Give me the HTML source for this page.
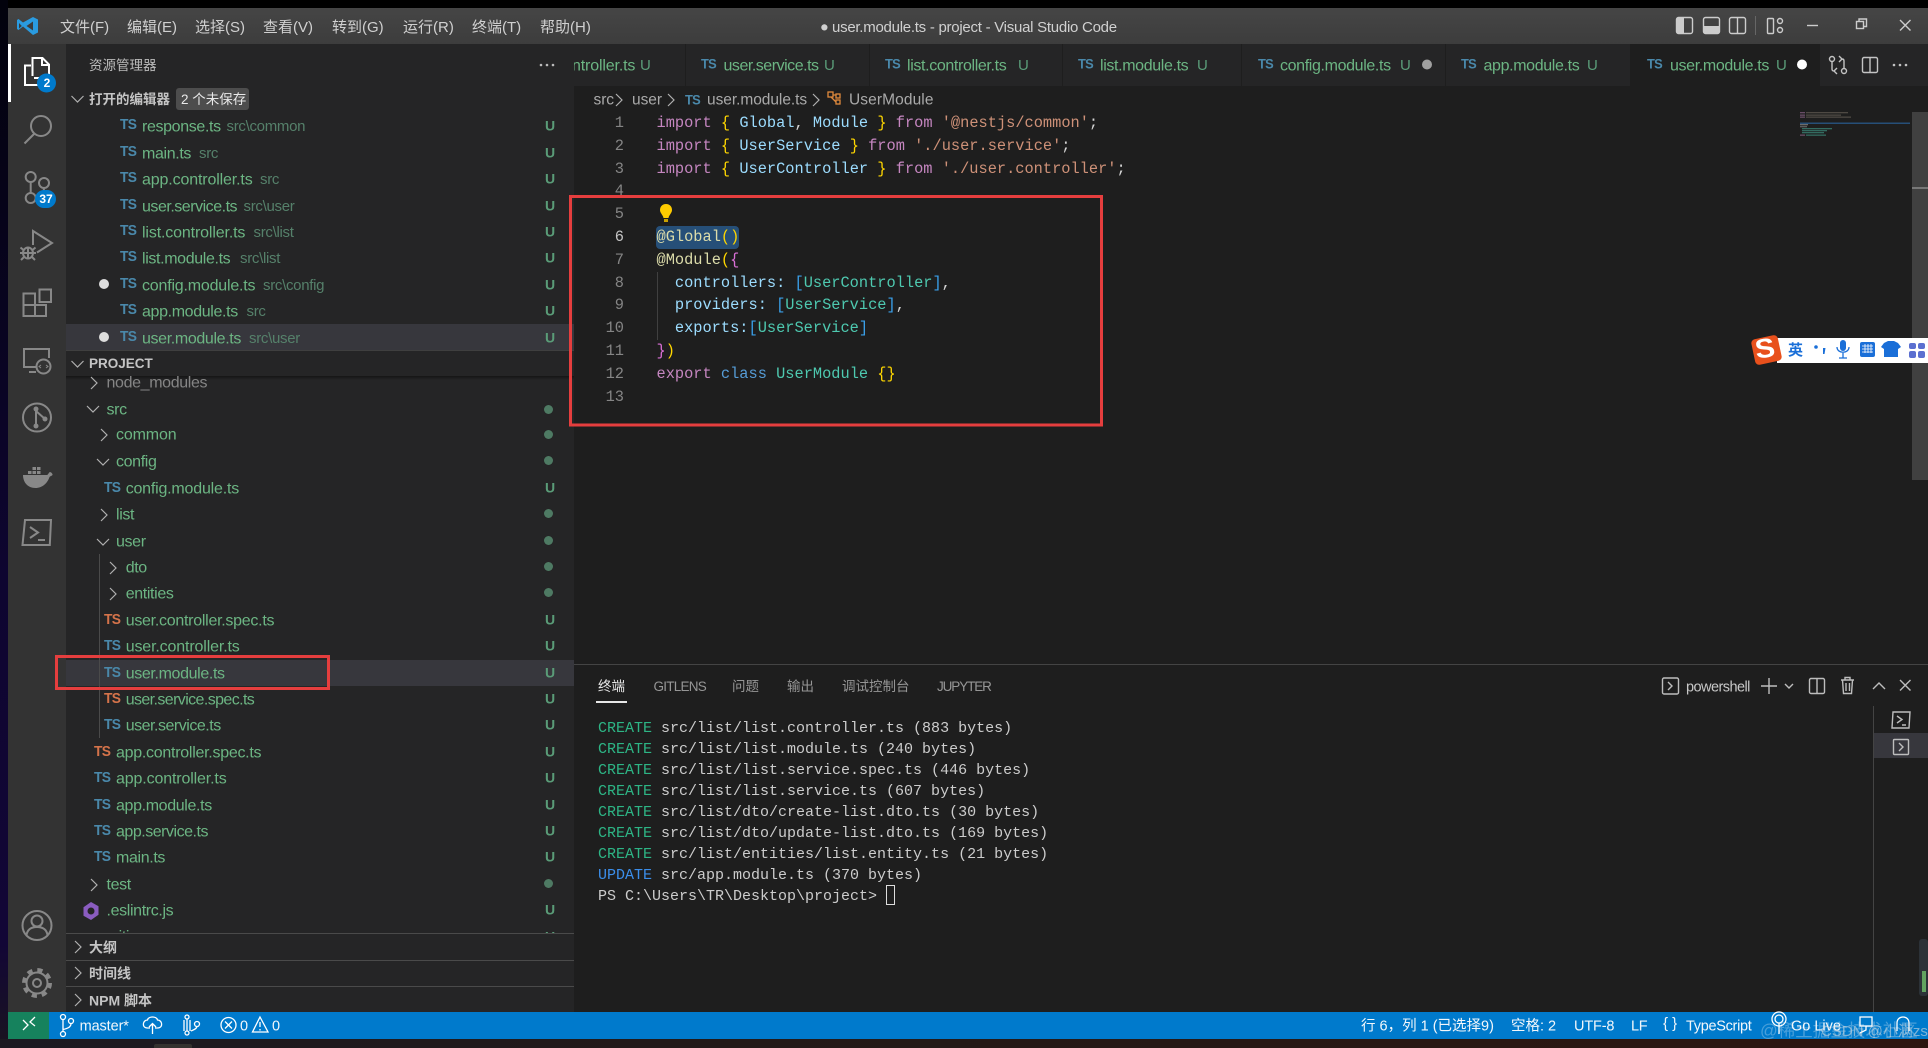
<!DOCTYPE html>
<html lang="zh"><head><meta charset="utf-8"><title>user.module.ts - project - Visual Studio Code</title>
<style>
*{box-sizing:border-box}
html,body{margin:0;padding:0;width:1928px;height:1048px;overflow:hidden;background:#000}
body{position:relative;font-family:"Liberation Sans","Noto Sans CJK SC",sans-serif;color:#ccc}
.b{position:absolute}
.t{position:absolute;transform:translateY(-50%);white-space:nowrap;line-height:1.2}
.n{font-size:16px;letter-spacing:-.36px;color:#6cb583}
.ct{letter-spacing:-.14px}.cs{letter-spacing:-.27px}.sv{letter-spacing:-.48px}.ss{letter-spacing:-.6px}.cf{letter-spacing:-.2px}
.d{font-size:15px;letter-spacing:-.3px;color:#55806a}
.u{font-size:14px;font-weight:bold;color:#5a9c78;left:545px}
.s{font-size:15px;font-weight:bold;letter-spacing:-.8px;color:#4a88aa;transform:translateY(-50%) scaleX(.92);transform-origin:left}
.sp{color:#d4734a}
.m{font-size:15px;color:#d0d0d0}
.tb{font-size:16px;letter-spacing:-.36px;color:#6cb583}
.tu{font-size:15px;color:#5a9c78}
.c{font-family:"Liberation Mono",monospace;font-size:15.33px;left:656.5px;color:#d4d4d4}
.l{font-family:"Liberation Mono",monospace;font-size:15.33px;left:584px;width:40px;text-align:right;color:#858585}
.k{color:#c586c0}.g{color:#ffd700}.v{color:#9cdcfe}.r{color:#ce9178}.y{color:#dcdcaa}.p{color:#da70d6}.q{color:#3a9fe8}.e{color:#4ec9b0}.h{color:#569cd6}
.w{font-family:"Liberation Mono",monospace;font-size:15px;left:598px;color:#cccccc}
.cr{color:#2db585}.up{color:#3b8eea}
.pt{font-size:13.5px;color:#969696}
.st{font-size:14.5px;color:#f2f7fb}
.o{position:absolute;border-radius:50%;background:#4e7a63;width:9px;height:9px;left:544px}
.h2{font-size:14px;font-weight:bold;color:#c4c4c4}
.bc{font-size:15.5px;letter-spacing:-.05px;color:#a9a9a9}
</style></head><body>
<!-- desktop edges -->
<div class="b" style="left:0;top:0;width:8px;height:1048px;background:linear-gradient(#02020c,#0e0530 55%,#120636 90%,#1a1420)"></div>
<div class="b" style="left:0;top:1039px;width:1928px;height:9px;background:linear-gradient(90deg,#1c1a22,#231a18 40%,#2c1610 100%)"></div>
<div class="b" style="left:154px;top:1044px;width:38px;height:4px;background:#35322f;border-radius:2px 2px 0 0"></div>
<!-- main regions -->
<div class="b" style="left:8px;top:8px;width:1920px;height:36px;background:linear-gradient(#454545,#3d3d3d)"></div>
<div class="b" style="left:8px;top:44px;width:58px;height:968px;background:#333"></div>
<div class="b" style="left:8px;top:44px;width:3px;height:58px;background:#fff"></div>
<div class="b" style="left:66px;top:44px;width:508px;height:968px;background:#252526"></div>
<div class="b" style="left:574px;top:44px;width:1354px;height:968px;background:#1e1e1e"></div>
<div class="b" style="left:574px;top:44px;width:1354px;height:42px;background:#252526"></div>
<div class="b" style="left:1630px;top:44px;width:190px;height:42px;background:#1e1e1e"></div>
<div class="b" style="left:685px;top:44px;width:1px;height:42px;background:#1e1e1e"></div>
<div class="b" style="left:869px;top:44px;width:1px;height:42px;background:#1e1e1e"></div>
<div class="b" style="left:1062px;top:44px;width:1px;height:42px;background:#1e1e1e"></div>
<div class="b" style="left:1241px;top:44px;width:1px;height:42px;background:#1e1e1e"></div>
<div class="b" style="left:1445px;top:44px;width:1px;height:42px;background:#1e1e1e"></div>
<div class="b" style="left:66px;top:324px;width:508px;height:26px;background:#37373d"></div>
<div class="b" style="left:66px;top:350px;width:508px;height:1px;background:#3f3f3f"></div>
<div class="b" style="left:66px;top:376px;width:508px;height:4px;background:linear-gradient(#151515,#252526)"></div>
<div class="b" style="left:66px;top:660px;width:508px;height:26px;background:#37373d"></div>
<div class="b" style="left:99px;top:554px;width:1px;height:184px;background:#4a4a4a"></div>
<div class="b" style="left:574px;top:664px;width:1354px;height:1px;background:#444"></div>
<div class="b" style="left:1873px;top:706px;width:1px;height:306px;background:#444"></div>
<div class="b" style="left:1874px;top:733px;width:54px;height:25px;background:#37373d"></div>
<div class="b" style="left:596px;top:701px;width:31px;height:1.5px;background:#e7e7e7"></div>
<div class="b" style="left:1912px;top:112px;width:16px;height:368px;background:#404040"></div>
<div class="b" style="left:1912px;top:187px;width:16px;height:2px;background:#777"></div>
<div class="b" style="left:656px;top:226px;width:83px;height:23px;background:#264f78;border-radius:4px"></div>
<div class="b" style="left:656.5px;top:272px;width:1px;height:68px;background:#404040"></div>
<!-- status bar -->
<div class="b" style="left:8px;top:1012px;width:1920px;height:27px;background:#007acc"></div>
<div class="b" style="left:8px;top:1012px;width:41px;height:27px;background:#16825d"></div>
<!-- sidebar lower headers -->
<div class="b" style="left:66px;top:933px;width:508px;height:1px;background:#4a4a4a"></div>
<div class="b" style="left:66px;top:960px;width:508px;height:1px;background:#4a4a4a"></div>
<div class="b" style="left:66px;top:986px;width:508px;height:1px;background:#4a4a4a"></div>
<!-- menu -->
<span class="t m" style="left:60px;top:28px">文件(F)</span>
<span class="t m" style="left:127px;top:28px">编辑(E)</span>
<span class="t m" style="left:195px;top:28px">选择(S)</span>
<span class="t m" style="left:263px;top:28px">查看(V)</span>
<span class="t m" style="left:332px;top:28px">转到(G)</span>
<span class="t m" style="left:403px;top:28px">运行(R)</span>
<span class="t m" style="left:472px;top:28px">终端(T)</span>
<span class="t m" style="left:540px;top:28px">帮助(H)</span>
<span class="t" style="left:820px;top:28px;font-size:14.5px;color:#d0d0d0">●</span>
<span class="t" style="left:832px;top:28px;font-size:15px;letter-spacing:-.26px;color:#d0d0d0">user.module.ts - project - Visual Studio Code</span>
<!-- explorer -->
<span class="t" style="left:89px;top:65.5px;font-size:13.5px;color:#bbb">资源管理器</span>
<span class="t h2" style="left:89px;top:100px;font-size:13.5px">打开的编辑器</span>
<div class="b" style="left:176px;top:88px;width:73px;height:22px;background:#4d4d4d;border-radius:3px"></div>
<span class="t" style="left:181px;top:100px;font-size:13.5px;color:#e8e8e8">2 个未保存</span>

<span class="t s" style="left:120px;top:125px">TS</span><span class="t n" style="left:142px;top:127px">response.ts</span><span class="t d" style="left:226.5px;top:127px">src\common</span><span class="t u" style="top:126px">U</span>
<span class="t s" style="left:120px;top:152px">TS</span><span class="t n" style="left:142px;top:154px">main.ts</span><span class="t d" style="left:199px;top:154px">src</span><span class="t u" style="top:153px">U</span>
<span class="t s" style="left:120px;top:178px">TS</span><span class="t n ct" style="left:142px;top:180px">app.controller.ts</span><span class="t d" style="left:260px;top:180px">src</span><span class="t u" style="top:179px">U</span>
<span class="t s" style="left:120px;top:205px">TS</span><span class="t n sv" style="left:142px;top:207px">user.service.ts</span><span class="t d" style="left:243.5px;top:207px">src\user</span><span class="t u" style="top:206px">U</span>
<span class="t s" style="left:120px;top:231px">TS</span><span class="t n ct" style="left:142px;top:233px">list.controller.ts</span><span class="t d" style="left:253.5px;top:233px">src\list</span><span class="t u" style="top:232px">U</span>
<span class="t s" style="left:120px;top:257px">TS</span><span class="t n" style="left:142px;top:259px">list.module.ts</span><span class="t d" style="left:240px;top:259px">src\list</span><span class="t u" style="top:258px">U</span>
<span class="t s" style="left:120px;top:284px">TS</span><span class="t n cf" style="left:142px;top:286px">config.module.ts</span><span class="t d" style="left:263px;top:286px">src\config</span><span class="t u" style="top:285px">U</span>
<span class="t s" style="left:120px;top:310px">TS</span><span class="t n" style="left:142px;top:312px">app.module.ts</span><span class="t d" style="left:246.5px;top:312px">src</span><span class="t u" style="top:311px">U</span>
<span class="t s" style="left:120px;top:337px">TS</span><span class="t n" style="left:142px;top:339px">user.module.ts</span><span class="t d" style="left:249px;top:339px">src\user</span><span class="t u" style="top:338px">U</span>

<span class="t h2" style="left:89px;top:364px;font-size:13.5px">PROJECT</span>
<span class="t n" style="left:106.5px;top:383px;color:#858585">node_modules</span>
<span class="t n" style="left:106.5px;top:410px">src</span><i class="o" style="top:405px"></i>
<span class="t n ct" style="left:116px;top:435px">common</span><i class="o" style="top:430px"></i>
<span class="t n" style="left:116px;top:462px">config</span><i class="o" style="top:456px"></i>
<span class="t s" style="left:104px;top:488px">TS</span><span class="t n cf" style="left:125.7px;top:489px">config.module.ts</span><span class="t u" style="top:488px">U</span>
<span class="t n" style="left:116px;top:515px">list</span><i class="o" style="top:509px"></i>
<span class="t n" style="left:116px;top:542px">user</span><i class="o" style="top:536px"></i>
<span class="t n" style="left:125.7px;top:568px">dto</span><i class="o" style="top:562px"></i>
<span class="t n" style="left:125.7px;top:594px">entities</span><i class="o" style="top:588px"></i>
<span class="t s sp" style="left:104px;top:620px">TS</span><span class="t n cs" style="left:125.7px;top:621px">user.controller.spec.ts</span><span class="t u" style="top:620px">U</span>
<span class="t s" style="left:104px;top:646px">TS</span><span class="t n ct" style="left:125.7px;top:647px">user.controller.ts</span><span class="t u" style="top:646px">U</span>
<span class="t s" style="left:104px;top:673px">TS</span><span class="t n" style="left:125.7px;top:674px">user.module.ts</span><span class="t u" style="top:673px">U</span>
<span class="t s sp" style="left:104px;top:699px">TS</span><span class="t n ss" style="left:125.7px;top:700px">user.service.spec.ts</span><span class="t u" style="top:699px">U</span>
<span class="t s" style="left:104px;top:725px">TS</span><span class="t n sv" style="left:125.7px;top:726px">user.service.ts</span><span class="t u" style="top:725px">U</span>
<span class="t s sp" style="left:94px;top:752px">TS</span><span class="t n cs" style="left:116px;top:753px">app.controller.spec.ts</span><span class="t u" style="top:752px">U</span>
<span class="t s" style="left:94px;top:778px">TS</span><span class="t n ct" style="left:116px;top:779px">app.controller.ts</span><span class="t u" style="top:778px">U</span>
<span class="t s" style="left:94px;top:805px">TS</span><span class="t n" style="left:116px;top:806px">app.module.ts</span><span class="t u" style="top:805px">U</span>
<span class="t s" style="left:94px;top:831px">TS</span><span class="t n sv" style="left:116px;top:832px">app.service.ts</span><span class="t u" style="top:831px">U</span>
<span class="t s" style="left:94px;top:857px">TS</span><span class="t n" style="left:116px;top:858px">main.ts</span><span class="t u" style="top:857px">U</span>
<span class="t n" style="left:106.5px;top:885px">test</span><i class="o" style="top:879px"></i>
<span class="t n" style="left:106.5px;top:911px">.eslintrc.js</span><span class="t u" style="top:910px">U</span>
<div class="b" style="left:66px;top:928px;width:508px;height:5px;overflow:hidden"><span class="t n" style="left:40px;top:9px">.gitignore</span><span class="t u" style="left:479px;top:9px">U</span></div>

<span class="t h2" style="left:89px;top:947.5px">大纲</span>
<span class="t h2" style="left:89px;top:973.5px">时间线</span>
<span class="t h2" style="left:89px;top:1000.5px">NPM 脚本</span>
<!-- tabs -->
<div class="b" style="left:574px;top:44px;width:111px;height:42px;overflow:hidden"><span class="t tb" style="left:-2px;top:22px;letter-spacing:-.15px">ntroller.ts</span></div>
<span class="t tu" style="left:640px;top:65.500px">U</span>
<span class="t s" style="left:701px;top:64px;font-size:14px">TS</span><span class="t tb" style="left:723.5px;top:66px;letter-spacing:-.48px">user.service.ts</span><span class="t tu" style="left:824px;top:65.500px">U</span>
<span class="t s" style="left:885px;top:64px;font-size:14px">TS</span><span class="t tb" style="left:907px;top:66px">list.controller.ts</span><span class="t tu" style="left:1018px;top:65.500px">U</span>
<span class="t s" style="left:1078px;top:64px;font-size:14px">TS</span><span class="t tb" style="left:1100px;top:66px">list.module.ts</span><span class="t tu" style="left:1197px;top:65.500px">U</span>
<span class="t s" style="left:1258px;top:64px;font-size:14px">TS</span><span class="t tb" style="left:1280px;top:66px">config.module.ts</span><span class="t tu" style="left:1400px;top:65.500px">U</span>
<span class="t s" style="left:1461px;top:64px;font-size:14px">TS</span><span class="t tb" style="left:1483.5px;top:66px">app.module.ts</span><span class="t tu" style="left:1587px;top:65.500px">U</span>
<span class="t s" style="left:1647px;top:64px;font-size:14px">TS</span><span class="t tb" style="left:1670px;top:66px">user.module.ts</span><span class="t tu" style="left:1776px;top:65.500px">U</span>
<!-- breadcrumb -->
<span class="t bc" style="left:593.5px;top:101px">src</span>
<span class="t bc" style="left:632px;top:101px">user</span>
<span class="t s" style="left:685px;top:100px;font-size:14px">TS</span>
<span class="t bc" style="left:707px;top:101px">user.module.ts</span>
<span class="t bc" style="left:849px;top:101px;letter-spacing:.1px">UserModule</span>
<!-- line numbers -->
<span class="t l" style="top:123px">1</span><span class="t l" style="top:146px">2</span><span class="t l" style="top:169px">3</span><span class="t l" style="top:191px">4</span><span class="t l" style="top:214px">5</span><span class="t l" style="top:237px;color:#c6c6c6">6</span><span class="t l" style="top:260px">7</span><span class="t l" style="top:283px">8</span><span class="t l" style="top:305px">9</span><span class="t l" style="top:328px">10</span><span class="t l" style="top:351px">11</span><span class="t l" style="top:374px">12</span><span class="t l" style="top:397px">13</span>
<!-- code -->
<span class="t c" style="top:123px"><span class="k">import</span> <span class="g">{</span> <span class="v">Global</span>, <span class="v">Module</span> <span class="g">}</span> <span class="k">from</span> <span class="r">'@nestjs/common'</span>;</span>
<span class="t c" style="top:146px"><span class="k">import</span> <span class="g">{</span> <span class="v">UserService</span> <span class="g">}</span> <span class="k">from</span> <span class="r">'./user.service'</span>;</span>
<span class="t c" style="top:169px"><span class="k">import</span> <span class="g">{</span> <span class="v">UserController</span> <span class="g">}</span> <span class="k">from</span> <span class="r">'./user.controller'</span>;</span>
<span class="t c" style="top:237px"><span class="y">@Global</span><span class="g">()</span></span>
<span class="t c" style="top:260px"><span class="y">@Module</span><span class="g">(</span><span class="p">{</span></span>
<span class="t c" style="top:283px"><span class="v" style="margin-left:18.4px">controllers</span><span class="v">:</span> <span class="q">[</span><span class="e">UserController</span><span class="q">]</span>,</span>
<span class="t c" style="top:305px"><span class="v" style="margin-left:18.4px">providers</span><span class="v">:</span> <span class="q">[</span><span class="e">UserService</span><span class="q">]</span>,</span>
<span class="t c" style="top:328px"><span class="v" style="margin-left:18.4px">exports</span><span class="v">:</span><span class="q">[</span><span class="e">UserService</span><span class="q">]</span></span>
<span class="t c" style="top:351px"><span class="p">}</span><span class="g">)</span></span>
<span class="t c" style="top:374px"><span class="k">export</span> <span class="h">class</span> <span class="e">UserModule</span> <span class="g">{}</span></span>
<!-- panel -->
<span class="t" style="left:598px;top:687px;font-size:13.5px;color:#e7e7e7">终端</span>
<span class="t pt" style="left:653.5px;top:687px;letter-spacing:-.75px">GITLENS</span>
<span class="t pt" style="left:732px;top:687px">问题</span>
<span class="t pt" style="left:787px;top:687px">输出</span>
<span class="t pt" style="left:842px;top:687px">调试控制台</span>
<span class="t pt" style="left:937px;top:687px;letter-spacing:-1.1px">JUPYTER</span>
<span class="t w" style="top:729px"><span class="cr">CREATE</span> src/list/list.controller.ts (883 bytes)</span>
<span class="t w" style="top:750px"><span class="cr">CREATE</span> src/list/list.module.ts (240 bytes)</span>
<span class="t w" style="top:771px"><span class="cr">CREATE</span> src/list/list.service.spec.ts (446 bytes)</span>
<span class="t w" style="top:792px"><span class="cr">CREATE</span> src/list/list.service.ts (607 bytes)</span>
<span class="t w" style="top:813px"><span class="cr">CREATE</span> src/list/dto/create-list.dto.ts (30 bytes)</span>
<span class="t w" style="top:834px"><span class="cr">CREATE</span> src/list/dto/update-list.dto.ts (169 bytes)</span>
<span class="t w" style="top:855px"><span class="cr">CREATE</span> src/list/entities/list.entity.ts (21 bytes)</span>
<span class="t w" style="top:876px"><span class="up">UPDATE</span> src/app.module.ts (370 bytes)</span>
<span class="t w" style="top:897px">PS C:\Users\TR\Desktop\project&gt;</span>
<div class="b" style="left:886px;top:885px;width:9px;height:20px;border:1px solid #ddd"></div>
<span class="t" style="left:1686px;top:687.5px;font-size:14.5px;letter-spacing:-.55px;color:#c8c8c8">powershell</span>
<!-- status -->
<span class="t st" style="left:79.6px;top:1027px;letter-spacing:-.1px">master*</span>
<span class="t st" style="left:240px;top:1027px">0</span>
<span class="t st" style="left:272px;top:1027px">0</span>
<span class="t st" style="left:1361px;top:1027px">行 6，列 1 (已选择9)</span>
<span class="t st" style="left:1511px;top:1027px">空格: 2</span>
<span class="t st" style="left:1574px;top:1027px;letter-spacing:-.15px">UTF-8</span>
<span class="t st" style="left:1631px;top:1027px;letter-spacing:-.3px">LF</span>
<span class="t st" style="left:1663px;top:1024px;font-size:15px">{ }</span>
<span class="t st" style="left:1686px;top:1027px;letter-spacing:-.3px">TypeScript</span>
<span class="t st" style="left:1791px;top:1027px">Go Live</span>
<!-- sogou -->
<div class="b" style="left:1777px;top:338px;width:151px;height:25px;background:#fff"></div>
<div class="b" style="left:1753px;top:337px;width:27px;height:26px;background:#e8501c;border-radius:4px;transform:rotate(-12deg)"></div>
<span class="t" style="left:1756px;top:349px;font-size:27px;font-weight:bold;color:#fff;line-height:1;transform:translateY(-50%) scaleX(1.1) rotate(-8deg)">S</span>
<span class="t" style="left:1788px;top:351px;font-size:15px;font-weight:bold;color:#1a6fd8">英</span>
<!-- icons overlay -->
<svg class="b" style="left:0;top:0;pointer-events:none" width="1928" height="1048" viewBox="0 0 1928 1048" fill="none">
<defs>
<path id="cr" d="M-3-6l6 6-6 6" stroke="#b0b0b0" stroke-width="1.200" fill="none"/>
<path id="cd" d="M-6-3l6 6 6-6" stroke="#b0b0b0" stroke-width="1.200" fill="none"/>
</defs>
<!-- logo -->
<path d="M33 17l5 2.500v13l-5 2.500-10-8.500-4.500 3.500-1.500-1v-9l1.500-1 4.500 3.500z" fill="#2a9be0"/><path d="M33 21.500l-6.500 4.500 6.500 4.500z" fill="#3c3c3c"/><path d="M19 23l2.800 3-2.800 2.500z" fill="#3c3c3c"/>
<!-- activity -->
<g stroke="#fff" stroke-width="2"><path d="M32.500 76V58h10l6.500 6.500V78H34"/><path d="M31 65.500h-6V85h18v-5"/><path d="M42 58v7h7"/></g>
<g stroke="#888" stroke-width="2">
<circle cx="41" cy="126" r="10"/><path d="M34 134l-9.500 9.500"/>
<circle cx="30.700" cy="177" r="5"/><circle cx="44" cy="183" r="5"/><circle cx="30.700" cy="198" r="5"/><path d="M30.700 182v11M44 188c0 5-4 8-8.500 9"/>
<path d="M33 245v-14l19 12-15 9.500"/><ellipse cx="28" cy="253" rx="5" ry="5.500"/><path d="M23 253h10M28 248v10M20.500 247.500l3 2.500M35.500 247.500l-3 2.500M20 253h3M33 253h3M21 260l3-3M35 260l-3-3"/>
<path d="M39.500 289.500h11.500v12.500h-11.500zM23.500 293.500h11.500v11.500h11v11H23.500zM35 305H23.500M35 305v11"/>
<path d="M36 367H24V349h25v9M29 372h7"/><circle cx="43.500" cy="366.500" r="7"/>
<circle cx="37" cy="417.500" r="14"/><path d="M36 409v17M36 411l9 8"/>
<path d="M25 520h26l-1.200 25H22.500zM30 527l8 5.500-8 5.500M38 540h7"/>
<circle cx="37" cy="925.500" r="14.500"/><circle cx="37" cy="921" r="5.500"/><path d="M26.500 935c1-6 5-8 10.500-8s9.500 2 10.500 8"/>
<circle cx="37" cy="983" r="10.500"/><circle cx="37" cy="983" r="4"/>
</g>
<path d="M41 365l-2 1.500 2 1.500M46 365l2 1.500-2 1.500" stroke="#888" stroke-width="1"/>
<circle cx="37" cy="983" r="13" stroke="#888" stroke-width="4" stroke-dasharray="5.200 5"/>
<g fill="#888"><circle cx="36" cy="409" r="2.500"/><circle cx="36" cy="426" r="2.500"/><circle cx="45" cy="419" r="2.500"/>
<path d="M23 475h24c1 0 2-3 3-3s3 2 2.500 3c-1 1-2 1-3 2-2 6-7 11-14 11-8 0-12.500-6-12.500-13z"/><rect x="28" y="471" width="3.500" height="3"/><rect x="32.500" y="471" width="3.500" height="3"/><rect x="37" y="471" width="3.500" height="3"/><rect x="32.500" y="467" width="3.500" height="3"/><rect x="37" y="467" width="3.500" height="3"/></g>
<circle cx="46.500" cy="83" r="9.500" fill="#007acc"/>
<rect x="35" y="190" width="21" height="18" rx="9" fill="#007acc"/>
<!-- chevrons -->
<g>
<use href="#cd" x="77.500" y="99"/><use href="#cd" x="77.500" y="364"/>
<use href="#cr" x="94" y="383"/><use href="#cd" x="93" y="409"/><use href="#cr" x="104" y="435"/><use href="#cd" x="103" y="462"/><use href="#cr" x="104" y="515"/><use href="#cd" x="103" y="542"/><use href="#cr" x="113" y="568"/><use href="#cr" x="113" y="594"/><use href="#cr" x="94" y="885"/>
<use href="#cr" x="78" y="947"/><use href="#cr" x="78" y="973"/><use href="#cr" x="78" y="1000"/>
<use href="#cr" x="619" y="100"/><use href="#cr" x="671" y="100"/><use href="#cr" x="816" y="100"/>
</g>
<g fill="#bbb"><circle cx="541" cy="65" r="1.300"/><circle cx="547" cy="65" r="1.300"/><circle cx="553" cy="65" r="1.300"/></g>
<!-- dots modified -->
<circle cx="104" cy="284" r="5" fill="#ddd"/><circle cx="104" cy="337" r="5" fill="#ddd"/>
<circle cx="1427" cy="64.500" r="5" fill="#a0a0a0"/><circle cx="1802" cy="64.500" r="5" fill="#fff"/>
<!-- eslint -->
<path d="M91 902l7.500 4.300v8.500L91 920l-7.500-4.300v-8.500z" fill="#8a5cc0"/><circle cx="91" cy="911" r="3.500" fill="#252526"/>
<!-- breadcrumb icon -->
<g stroke="#e08a3c" stroke-width="1.300"><rect x="828" y="92" width="5" height="5"/><rect x="836" y="100" width="4" height="4"/><rect x="836" y="94" width="4" height="4"/><path d="M831 97l5 5M833 95h3"/></g>
<!-- bulb -->
<path d="M666 204c4 0 6 3 6 6 0 3-3 5-3.500 8h-5c-.5-3-3.500-5-3.500-8 0-3 2-6 6-6z" fill="#ffcc00"/><rect x="664" y="219" width="4" height="3" fill="#c9a000"/>
<!-- red boxes -->
<rect x="570.500" y="196.500" width="531" height="228.500" stroke="#e53e3e" stroke-width="3"/>
<rect x="56.500" y="656.500" width="272" height="32" stroke="#e53e3e" stroke-width="3"/>
<!-- title icons -->
<g stroke="#ccc" stroke-width="1.400">
<rect x="1676.500" y="17.500" width="16" height="16" rx="2"/><rect x="1703.500" y="17.500" width="16" height="16" rx="2"/><rect x="1729.500" y="17.500" width="16" height="16" rx="2"/><path d="M1737.500 17.500v16"/>
<rect x="1767.500" y="18.500" width="6" height="15" rx="1"/><circle cx="1780" cy="21" r="2.500"/><circle cx="1780" cy="30" r="2.500"/>
<path d="M1807 25.500h11"/><rect x="1856.500" y="21.500" width="7" height="7"/><path d="M1859 21.500v-2.500h7.500v7.500H1864"/><path d="M1900 20l10.500 10.500M1910.500 20L1900 30.500"/>
</g>
<rect x="1677" y="18" width="7" height="15" fill="#ccc"/><rect x="1704" y="26" width="15" height="7" fill="#ccc"/><path d="M1755.500 16v19" stroke="#666"/>
<!-- tab actions -->
<g stroke="#c4c4c4" stroke-width="1.400">
<circle cx="1832" cy="59" r="2.500"/><circle cx="1844" cy="71" r="2.500"/><path d="M1832 62v7c0 1.500 1 2 2 2h1M1844 68v-7c0-1.500-1-2-2-2h-1M1837 68l-3 3 3 3M1839 56l3 3-3 3"/>
<rect x="1862.500" y="57.500" width="15" height="15" rx="1.500"/><path d="M1870 57.500v15"/>
</g>
<g fill="#c4c4c4"><circle cx="1894" cy="65" r="1.300"/><circle cx="1900" cy="65" r="1.300"/><circle cx="1906" cy="65" r="1.300"/></g>
<!-- minimap -->
<g opacity=".45">
<rect x="1800" y="112" width="5" height="1.300" fill="#c586c0"/><rect x="1806" y="112" width="42" height="1.300" fill="#8a7f70"/>
<rect x="1800" y="114.500" width="5" height="1.300" fill="#c586c0"/><rect x="1806" y="114.500" width="35" height="1.300" fill="#8a7f70"/>
<rect x="1800" y="116.500" width="5" height="1.300" fill="#c586c0"/><rect x="1806" y="116.500" width="45" height="1.300" fill="#8a7f70"/>
<rect x="1800" y="124" width="8" height="1.300" fill="#ccc"/>
<rect x="1800" y="126" width="7" height="1.300" fill="#aaa"/>
<rect x="1802" y="128" width="30" height="1.300" fill="#4ec9b0"/><rect x="1802" y="130" width="25" height="1.300" fill="#4ec9b0"/><rect x="1802" y="132" width="22" height="1.300" fill="#4ec9b0"/>
<rect x="1800" y="134.500" width="5" height="1.300" fill="#c586c0"/><rect x="1806" y="134.500" width="20" height="1.300" fill="#4ec9b0"/>
</g>
<rect x="1800" y="122.500" width="110" height="1.500" fill="#264f78"/>
<!-- panel icons -->
<g stroke="#bdbdbd" stroke-width="1.400">
<rect x="1662.500" y="678" width="16" height="16" rx="1.500"/><path d="M1668 682l4 4-4 4"/>
<path d="M1769 678v16M1761 686h16M1785 684l4 4 4-4"/>
<rect x="1809.500" y="678.500" width="15" height="15" rx="1.500"/><path d="M1817 678.500v15"/>
<path d="M1841 680h13M1845 680v-2.500h5v2.500M1842.500 680l1 13.500h8l1-13.500M1846 683v8M1849.500 683v8"/>
<path d="M1873 689l6-6 6 6M1900 680l10.500 10.500M1910.500 680L1900 690.500"/>
<path d="M1893 712h17l-1 16h-17zM1897 716l5 3.500-5 3.500M1902 725h4"/>
<rect x="1893.500" y="739.500" width="15" height="15" rx="1"/><path d="M1899 743l4 4-4 4"/>
</g>
<!-- volume thing -->
<rect x="1919" y="939" width="9" height="57" rx="3" fill="#2c3238"/><rect x="1922" y="971" width="4" height="21" fill="#6fbf6a" opacity=".8"/>
<!-- status icons -->
<g stroke="#fff" stroke-width="1.300">
<path d="M23 1020l5 5-5 5M35 1017l-5 5 5 4"/>
<circle cx="63" cy="1017" r="2.500"/><circle cx="63" cy="1034" r="2.500"/><circle cx="71" cy="1021" r="2.500"/><path d="M63 1019.500v12M71 1023.500c0 4-4 5-8 6"/>
<path d="M150 1028h-2.500c-6 0-5-8 0-8 1-4 9-4 10 0 5 0 6 8 0 8H155M152.500 1034v-10M149 1027l3.500-3.500 3.500 3.500"/>
<circle cx="187" cy="1017" r="2"/><circle cx="187" cy="1033" r="2"/><circle cx="197" cy="1024" r="2.500"/><path d="M187 1019v12M184 1020v11M190 1020v11M197 1026c0 3-4 4-6 5"/>
<circle cx="228.500" cy="1025" r="7.500"/><path d="M225 1021.500l7 7M232 1021.500l-7 7"/>
<path d="M260 1017l8 15h-15.500zM260 1022v5M260 1029v1.500"/>
<circle cx="1779" cy="1019" r="4"/><circle cx="1779" cy="1019" r="7"/><path d="M1779 1023v11"/>
<rect x="1860" y="1017" width="12" height="9"/><path d="M1866 1026v4l-6 3"/>
<path d="M1897 1031v-8c0-8 12-8 12 0v8"/>
</g>
<!-- sogou icons -->
<g fill="#1a6fd8">
<circle cx="1816" cy="347" r="1.800"/><path d="M1823 348h2.500l-1 6h-1.500z"/>
<rect x="1840" y="340" width="6" height="11" rx="3"/><path d="M1837 347c0 7 12 7 12 0M1843 353v5M1839 358h8" stroke="#1a6fd8" stroke-width="1.300" fill="none"/>
<rect x="1860" y="342" width="15" height="15" rx="2"/>
<path d="M1884 343l4-2h6l4 2 3 4-3 2v8h-14v-8l-3-2z"/>
</g>
<path d="M1862 346h11M1862 349h11M1862 352h11M1865 344v9M1868 344v9M1871 344v9" stroke="#fff" stroke-width=".8"/>
<g fill="#5b6fd0"><rect x="1909" y="343" width="7" height="6" rx="2"/><rect x="1918" y="343" width="7" height="6" rx="2"/><rect x="1909" y="351" width="7" height="7" rx="2"/><rect x="1918" y="351" width="7" height="7" rx="2"/></g>
</svg>
<span class="t" style="left:41px;top:83px;width:12px;text-align:center;font-size:12px;font-weight:bold;color:#fff">2</span>
<span class="t" style="left:38px;top:199px;width:16px;text-align:center;font-size:12px;font-weight:bold;color:#fff">37</span>
<!-- watermark -->
<span class="t" style="left:1760px;top:1031px;font-size:17.5px;color:rgba(255,255,255,.28)">@稀土掘金技术社区</span>
<span class="t" style="left:1821px;top:1032px;font-size:15px;color:rgba(225,225,225,.55)">CSDN @小满zs</span>
</body></html>
